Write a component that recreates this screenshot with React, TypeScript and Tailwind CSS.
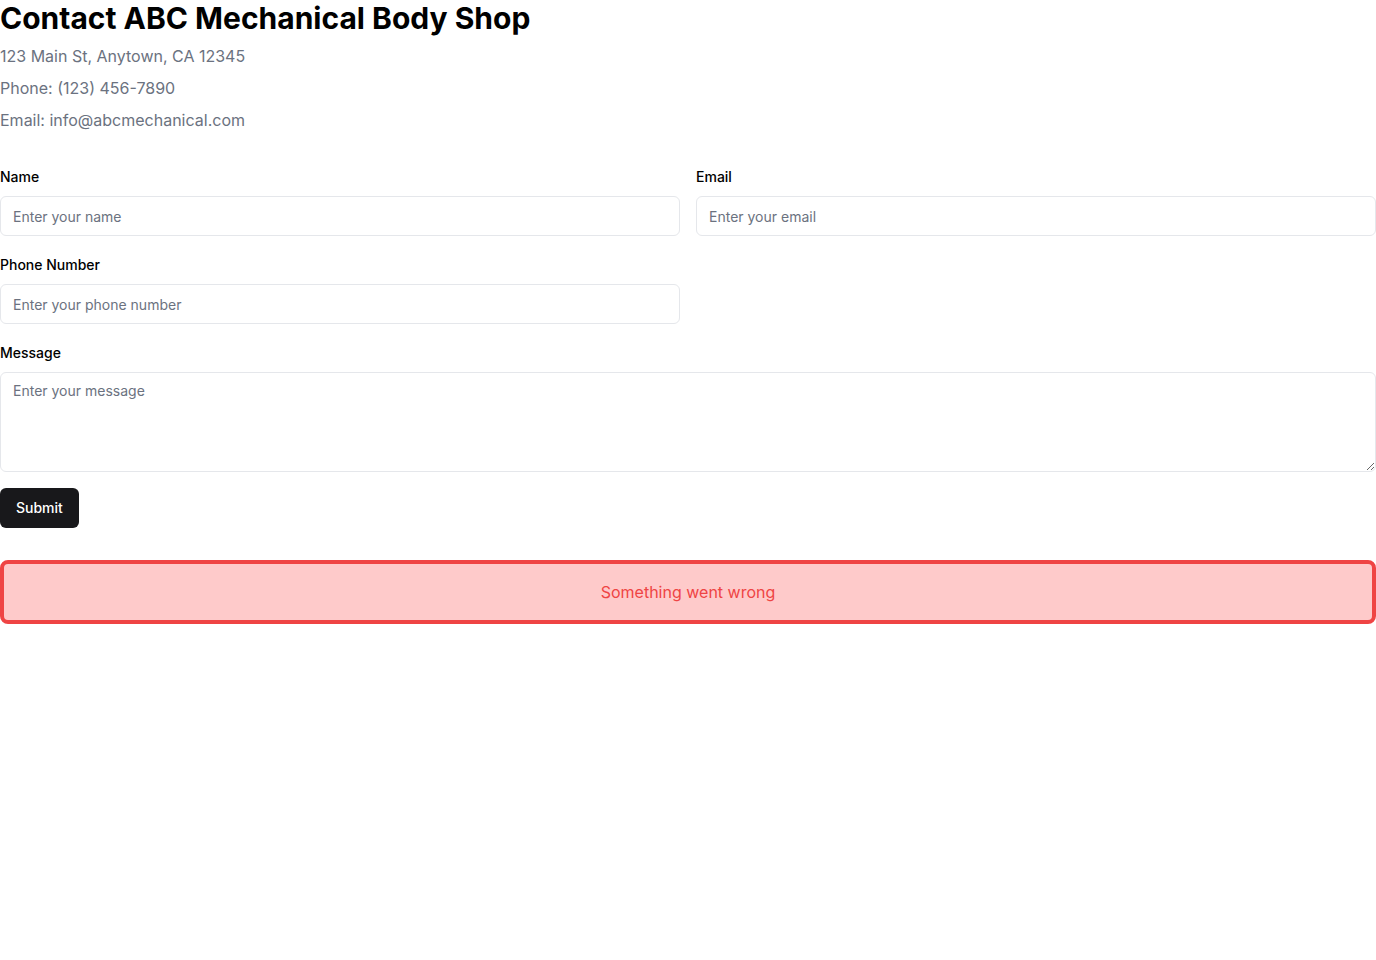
import React from 'react';

export default function App() {
  const inputCls =
    'w-full h-10 px-3 rounded-md border border-[#e5e7eb] bg-white text-sm text-gray-900 placeholder:text-[#6b7280] outline-none';

  return (
    <div className="w-[1376px] bg-white text-black" style={{ fontFamily: 'Inter, "Liberation Sans", sans-serif' }}>
      <h1 className="text-3xl font-bold mb-2">Contact ABC Mechanical Body Shop</h1>
      <p className="text-base text-[#6b7280] mb-2">123 Main St, Anytown, CA 12345</p>
      <p className="text-base text-[#6b7280] mb-2">Phone: (123) 456-7890</p>
      <p className="text-base text-[#6b7280]">Email: info@abcmechanical.com</p>

      <form className="mt-[35px]" onSubmit={(e) => e.preventDefault()}>
        <div className="grid grid-cols-2 gap-x-4 gap-y-[19px]">
          <div>
            <label className="block text-sm font-medium mb-[9px]">Name</label>
            <input className={inputCls} placeholder="Enter your name" />
          </div>
          <div>
            <label className="block text-sm font-medium mb-[9px]">Email</label>
            <input className={inputCls} placeholder="Enter your email" />
          </div>
          <div>
            <label className="block text-sm font-medium mb-[9px]">Phone Number</label>
            <input className={inputCls} placeholder="Enter your phone number" />
          </div>
          <div className="col-span-2">
            <label className="block text-sm font-medium mb-[9px]">Message</label>
            <textarea
              className="block w-full h-[100px] px-3 py-2 rounded-md border border-[#e5e7eb] bg-white text-sm placeholder:text-[#6b7280] outline-none"
              placeholder="Enter your message"
            />
          </div>
        </div>
        <button type="submit" className="mt-4 h-10 px-4 rounded-md bg-[#18181b] text-white text-sm font-medium">
          Submit
        </button>
      </form>

      <div className="mt-8 rounded-lg border-4 border-[#ef4444] bg-[#fecaca] p-4 text-center text-base text-[#ef4444]">
        Something went wrong
      </div>
    </div>
  );
}
